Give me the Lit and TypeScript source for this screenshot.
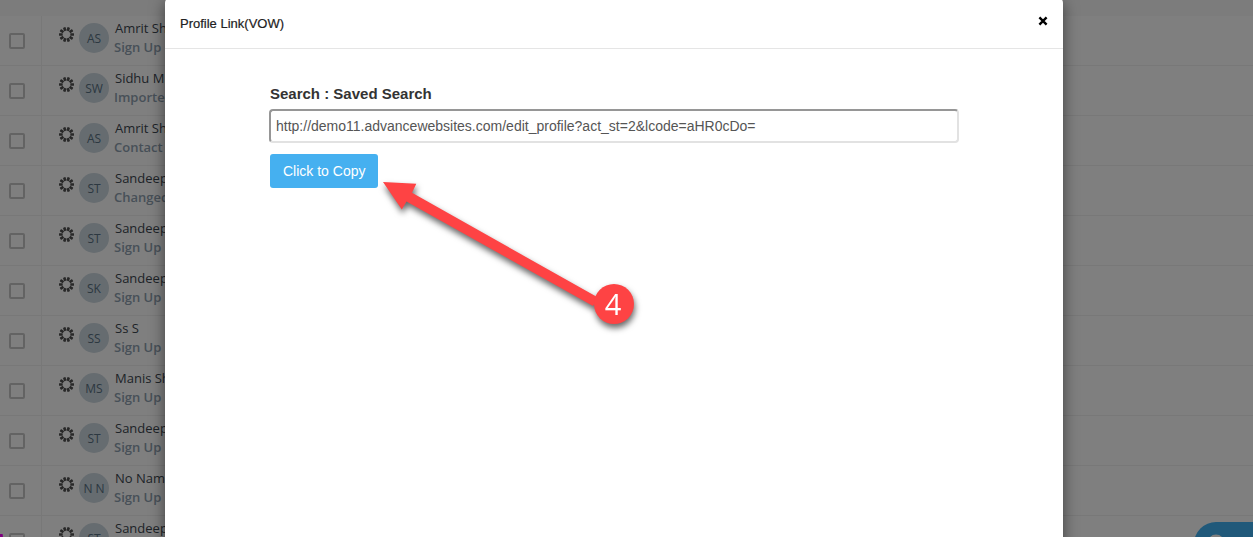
import { LitElement, html, css, svg } from "lit";
import { customElement, property, state } from "lit/decorators.js";

interface Lead {
  initials: string;
  name: string;
  status: string;
}

const LEADS: Lead[] = [
  { initials: "AS", name: "Amrit Sh", status: "Sign Up" },
  { initials: "SW", name: "Sidhu M", status: "Imported" },
  { initials: "AS", name: "Amrit Sh", status: "Contact" },
  { initials: "ST", name: "Sandeep", status: "Changed" },
  { initials: "ST", name: "Sandeep", status: "Sign Up" },
  { initials: "SK", name: "Sandeep", status: "Sign Up" },
  { initials: "SS", name: "Ss S", status: "Sign Up" },
  { initials: "MS", name: "Manis Sh", status: "Sign Up" },
  { initials: "ST", name: "Sandeep", status: "Sign Up" },
  { initials: "N N", name: "No Nam", status: "Sign Up" },
  { initials: "ST", name: "Sandeep", status: "Sign Up" },
];

const SPINNER_ANGLES = [18, 54, 90, 126, 162, 198, 234, 270, 306, 342];

@customElement("lead-list")
export class LeadList extends LitElement {
  @property({ attribute: false }) leads: Lead[] = [];

  static styles = css`
    :host {
      display: block;
      font-family: "Open Sans", "Noto Sans", sans-serif;
      background: #fff;
    }
    .band {
      height: 16px;
      background: #f8f8f8;
    }
    .row {
      display: flex;
      height: 50px;
      box-sizing: border-box;
      border-bottom: 1px solid #f0f0f0;
    }
    .pick {
      flex: none;
      width: 42px;
      box-sizing: border-box;
      padding: 17px 0 0 9px;
      border-right: 1px solid #f0f0f0;
    }
    .box {
      display: block;
      appearance: none;
      box-sizing: border-box;
      width: 16px;
      height: 16px;
      margin: 0;
      border: 2px solid #c6c6c6;
      border-radius: 2px;
    }
    .who {
      display: flex;
      flex: 1;
      padding-left: 17px;
    }
    .spinner {
      flex: none;
      width: 15px;
      height: 15px;
      margin-top: 11px;
    }
    .avatar {
      flex: none;
      width: 30px;
      height: 30px;
      margin: 7px 5px 0 5px;
      border-radius: 50%;
      background: #ccd8e0;
      color: #587082;
      font-size: 12px;
      font-weight: 500;
      line-height: 32px;
      text-align: center;
    }
    .text {
      padding-top: 3px;
      white-space: nowrap;
    }
    .name {
      padding-left: 1px;
      font-size: 13px;
      line-height: 19px;
      color: #3c4650;
    }
    .status {
      font-size: 13px;
      font-weight: 600;
      line-height: 19px;
      color: #8fa1b0;
    }
  `;

  render() {
    return html`
      <div class="band"></div>
      ${this.leads.map(
        (lead) => html`
          <div class="row">
            <div class="pick">
              <input class="box" type="checkbox" aria-label=${lead.name} />
            </div>
            <div class="who">
              <svg class="spinner" viewBox="0 0 15 15" aria-hidden="true">
                ${SPINNER_ANGLES.map(
                  (a) => svg`<rect x="6.2" y="0" width="2.6" height="3.7" rx="0.4"
                    fill="#505050" transform="rotate(${a} 7.5 7.5)" />`
                )}
              </svg>
              <div class="avatar">${lead.initials}</div>
              <div class="text">
                <div class="name">${lead.name}</div>
                <div class="status">${lead.status}</div>
              </div>
            </div>
          </div>
        `
      )}
    `;
  }
}

@customElement("link-dialog")
export class LinkDialog extends LitElement {
  @property() link = "";

  static styles = css`
    :host {
      display: block;
      background: #fff;
      border-radius: 6px;
      box-shadow: 0 5px 15px rgba(0, 0, 0, 0.5);
      font-family: "Liberation Sans", Arial, sans-serif;
    }
    .head {
      display: flex;
      align-items: flex-start;
      justify-content: space-between;
      height: 52px;
      padding: 17px 15px 0;
      box-sizing: border-box;
      border-bottom: 1px solid #e5e5e5;
    }
    .title {
      margin: 0;
      font-size: 13px;
      font-weight: 400;
      line-height: 20px;
      color: #222;
      -webkit-text-stroke: 0.2px #222;
    }
    .close {
      display: flex;
      margin: 2px 0 0;
      padding: 0;
      border: 0;
      background: none;
    }
    .body {
      display: flex;
      flex-direction: column;
      align-items: flex-start;
      padding: 35px 104px 30px;
    }
    .label {
      padding-left: 1px;
      font-size: 15px;
      font-weight: 700;
      line-height: 20px;
      color: #333;
    }
    .field {
      width: 100%;
      height: 34px;
      box-sizing: border-box;
      margin: 5px 0 11px;
      padding: 0 5px;
      border: 2px solid #e2e2e2;
      border-top-color: #969696;
      border-left-color: #969696;
      border-radius: 4px;
      background: #fff;
      font: 14px "Liberation Sans", Arial, sans-serif;
      color: #555;
      outline: none;
    }
    .copy {
      height: 34px;
      margin-left: 1px;
      padding: 0 13px;
      border: 0;
      border-radius: 3px;
      background: #45b0f0;
      font: 14px "Liberation Sans", Arial, sans-serif;
      color: #fff;
    }
  `;

  private copy() {
    navigator.clipboard?.writeText(this.link);
  }

  private close() {
    this.dispatchEvent(new CustomEvent("dialog-close"));
  }

  render() {
    return html`
      <div class="head">
        <h4 class="title">Profile Link(VOW)</h4>
        <button class="close" type="button" aria-label="Close" @click=${this.close}>
          <svg width="10" height="10" viewBox="0 0 10 10">
            <path d="M1.4 1.4 8.6 8.6M8.6 1.4 1.4 8.6" stroke="#000" stroke-width="2.4" />
          </svg>
        </button>
      </div>
      <div class="body">
        <label class="label" for="link">Search : Saved Search</label>
        <input class="field" id="link" type="text" readonly .value=${this.link} />
        <button class="copy" type="button" @click=${this.copy}>Click to Copy</button>
      </div>
    `;
  }
}

@customElement("app-root")
export class AppRoot extends LitElement {
  @state() private open = true;

  static styles = css`
    :host {
      display: block;
      position: relative;
      height: 100vh;
      overflow: hidden;
    }
    .chat {
      position: absolute;
      right: -21px;
      bottom: -29px;
      display: flex;
      align-items: flex-start;
      width: 80px;
      height: 44px;
      padding: 12px 0 0 14px;
      box-sizing: border-box;
      border: 0;
      border-radius: 22px;
      background: #40b2f4;
    }
    .chat-icon {
      display: block;
    }
    .launcher {
      position: absolute;
      left: -37px;
      bottom: -21px;
      width: 40px;
      height: 40px;
      border-radius: 50%;
      background: #f0f;
      clip-path: inset(16px 0 0 0);
    }
    .overlay {
      position: absolute;
      inset: 0;
      display: flex;
      justify-content: center;
      padding-right: 25px;
      background: rgba(0, 0, 0, 0.5);
    }
    .dialog {
      flex: 0 1 898px;
      height: 120%;
      margin-top: -3px;
    }
    .callout {
      position: absolute;
      left: 370px;
      top: 170px;
      pointer-events: none;
      filter: drop-shadow(1px 4px 3px rgba(0, 0, 0, 0.6));
    }
    .number {
      font: 29px "Open Sans", "Noto Sans", sans-serif;
      fill: #fff;
    }
  `;

  render() {
    return html`
      <lead-list .leads=${LEADS}></lead-list>
      <div class="launcher"></div>
      <button class="chat" type="button" aria-label="Chat">
        <svg class="chat-icon" width="20" height="20" viewBox="0 0 20 20">
          <circle cx="8" cy="9" r="8.5" fill="#fff" />
        </svg>
      </button>
      ${this.open
        ? html`
            <div class="overlay">
              <link-dialog
                class="dialog"
                link="http://demo11.advancewebsites.com/edit_profile?act_st=2&lcode=aHR0cDo="
                @dialog-close=${() => (this.open = false)}
              ></link-dialog>
            </div>
            <svg class="callout" width="280" height="170" viewBox="0 0 280 170">
              <path
                d="M13 12 46.3 13.8 42 22.8 228 127.5 223 136 36.5 31.5 31.8 39.5Z"
                fill="#fe4344"
              />
              <circle cx="244" cy="134" r="20" fill="#fe4344" />
              <text class="number" x="243" y="145" text-anchor="middle">4</text>
            </svg>
          `
        : null}
    `;
  }
}
